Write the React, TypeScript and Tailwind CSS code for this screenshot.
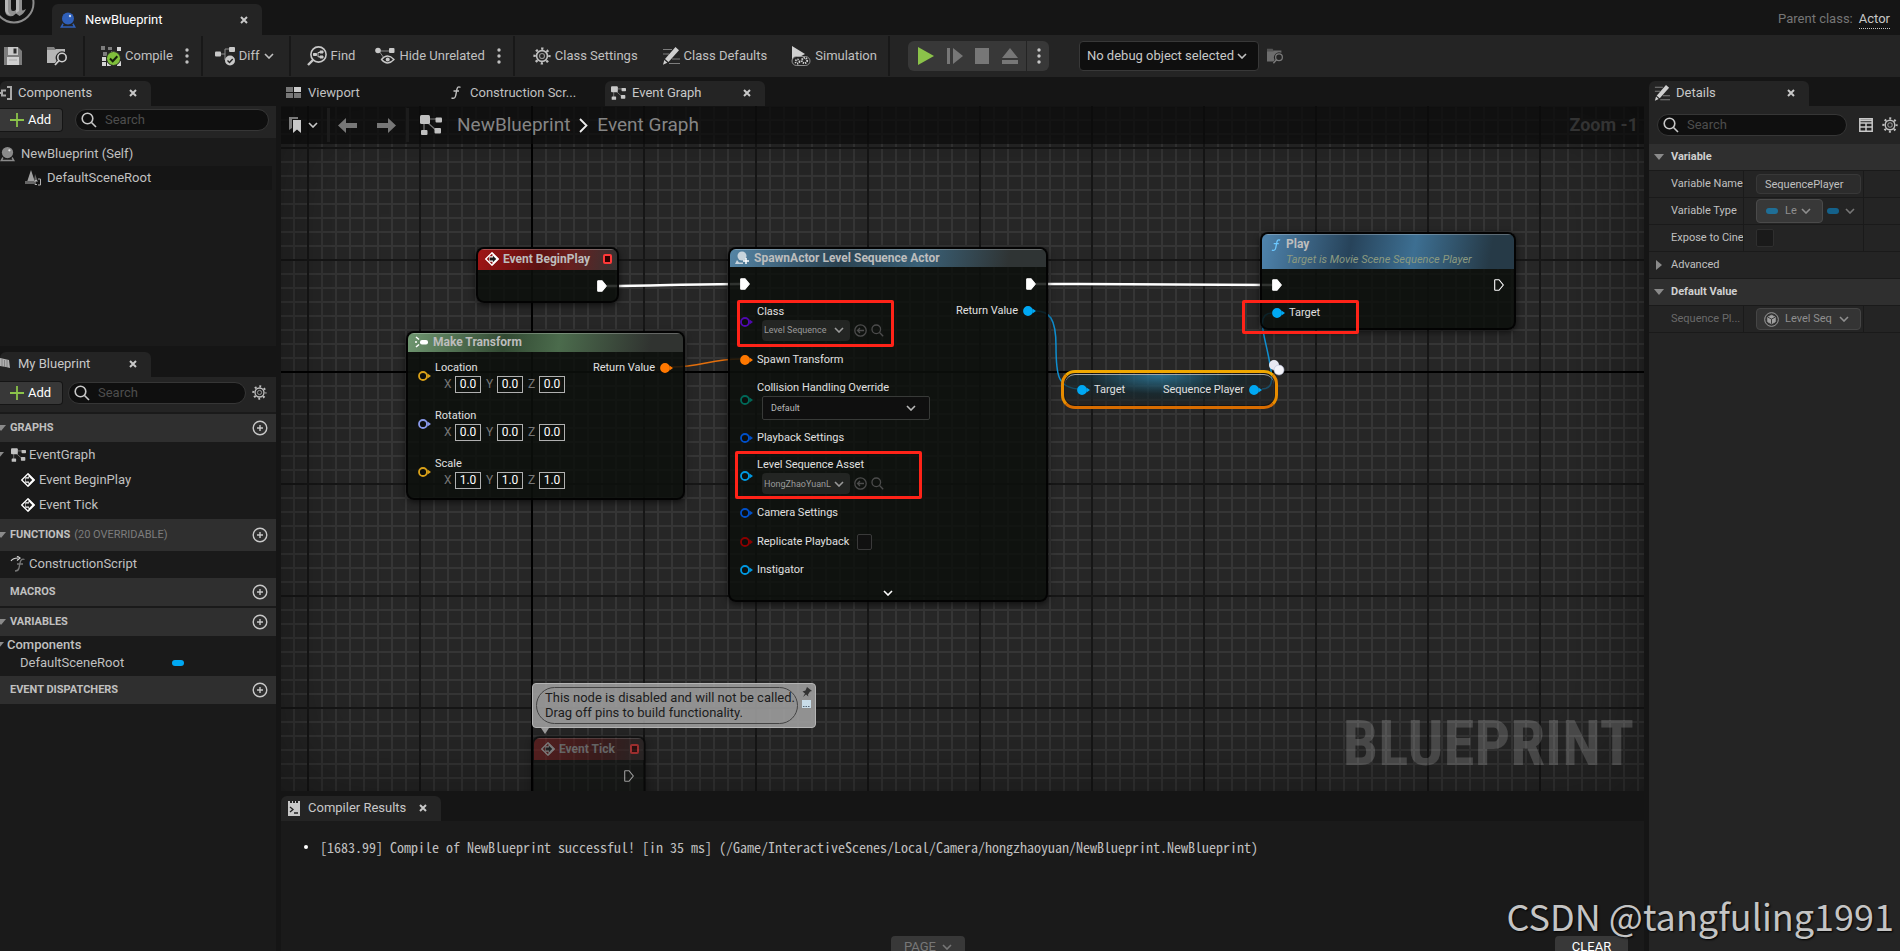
import { useState, type ReactNode } from "react";
import clsx from "clsx";

type IconProps = { className?: string };

/* ---------- icons ---------- */

const Chevron = ({ className = "w-2.5 h-1.5" }: IconProps) => (
  <svg viewBox="0 0 10 6" className={className} fill="none" stroke="currentColor" strokeWidth="1.6">
    <path d="M1 1l4 4 4-4" />
  </svg>
);

const Close = () => (
  <svg viewBox="0 0 8 8" className="w-2 h-2" stroke="currentColor" strokeWidth="2">
    <path d="M1 1l6 6M7 1L1 7" />
  </svg>
);

const Dots = () => (
  <svg viewBox="0 0 4 16" className="w-1 h-4" fill="currentColor">
    <circle cx="2" cy="2" r="1.7" />
    <circle cx="2" cy="8" r="1.7" />
    <circle cx="2" cy="14" r="1.7" />
  </svg>
);

const SearchIcon = ({ className = "w-4 h-4" }: IconProps) => (
  <svg viewBox="0 0 16 16" className={className} fill="none" stroke="currentColor" strokeWidth="1.6">
    <circle cx="6.5" cy="6.5" r="5.3" />
    <path d="M10.5 10.5L15 15" />
  </svg>
);

const Gear = ({ className = "w-4 h-4" }: IconProps) => (
  <svg viewBox="0 0 18 18" className={className} fill="none" stroke="currentColor">
    <circle cx="9" cy="9" r="7.4" strokeWidth="2.4" strokeDasharray="2.3 3.51" strokeDashoffset="1.1" />
    <circle cx="9" cy="9" r="5.4" strokeWidth="1.6" />
    <circle cx="9" cy="9" r="2.5" strokeWidth="1.2" opacity=".7" />
  </svg>
);

const GraphIcon = ({ className = "w-[15px] h-[14px]" }: IconProps) => (
  <svg viewBox="0 0 22 20" className={className} fill="currentColor">
    <path d="M6 4h13M4 5v12M8 8l9 8" stroke="currentColor" strokeWidth="1.2" opacity=".6" />
    <rect width="10" height="9" rx="1.5" />
    <rect x="15.5" y="2.5" width="6.5" height="5" rx="1" />
    <rect x="1" y="15" width="6.5" height="5" rx="1" />
    <rect x="14.5" y="13" width="6.5" height="5.5" rx="1" />
  </svg>
);

const SphereIcon = ({ className }: IconProps) => (
  <svg viewBox="0 0 16 16" className={className} fill="currentColor">
    <circle cx="8" cy="6.5" r="6" />
    <path d="M2.5 11.2L0 15.7h16l-2.500-4.500-1.200 1 .9 2H2.800l.9-2z" />
    <circle cx="10" cy="4" r="1.2" fill="#fff" opacity=".75" />
  </svg>
);

const Save = () => (
  <svg viewBox="0 0 18 18" className="w-[18px] h-[18px]">
    <path d="M0 0h14l4 4v14H0z" fill="#7d7d7d" />
    <path d="M4 0h10v8H4z" fill="#c8c8c8" />
    <path d="M9.5 1.5h3v5h-3z" fill="#2b2b2b" />
    <path d="M3 10h12v8H3z" fill="#d0d0d0" />
    <path d="M5 13h8" stroke="#aaa" />
  </svg>
);

const FolderSearch = ({ className = "w-5 h-5" }: IconProps) => (
  <svg viewBox="0 0 20 20" className={className}>
    <path d="M0 1h7l2 3H0z" fill="currentColor" opacity=".55" />
    <path d="M0 4h8l1-1h9v3a6.500 6.500 0 00-8.500 9L8 17H0z" fill="currentColor" opacity=".85" />
    <circle cx="15" cy="11.5" r="4.2" fill="none" stroke="currentColor" strokeWidth="1.6" />
    <path d="M12 14.5L8 19" stroke="currentColor" strokeWidth="1.8" />
  </svg>
);

const CompileIcon = () => (
  <svg viewBox="0 0 20 20" className="w-5 h-5">
    <path d="M0 0h4v4H0zM7 1h4v3H7zM2 6h4v4H2z" fill="#7d7d7d" />
    <path d="M16 1h4v4h-4zM1 11h4v4H1zM1 16h4v4H1zM6 16h4v4H6zM16 15h4v5h-4zM10 5h4v3h-4z" fill="#d5d5d5" />
    <circle cx="12.5" cy="12.5" r="7" fill="#7fbf3b" stroke="#242424" />
    <path d="M9 12.5l2.700 2.700 4.600-5" stroke="#14200a" strokeWidth="2" fill="none" />
  </svg>
);

const DiffIcon = () => (
  <svg viewBox="0 0 20 20" className="w-5 h-5" fill="#c8c8c8">
    <path d="M5 8h5V3h5M10 8v6" stroke="#8a8a8a" fill="none" />
    <rect y="5.5" width="6" height="5" rx="1" />
    <rect x="14" y="1" width="6" height="5" rx="1" />
    <circle cx="15" cy="14.5" r="5" />
    <path d="M12.5 14.500l2 2 3.200-3.500" stroke="#222" strokeWidth="1.4" fill="none" />
  </svg>
);

const FindIcon = () => (
  <svg viewBox="0 0 20 20" className="w-5 h-5" fill="none" stroke="#c8c8c8">
    <circle cx="11.5" cy="8.5" r="7.6" strokeWidth="1.6" />
    <path d="M6 14L1 19" strokeWidth="2.4" />
    <path d="M6.5 8.500h3m1.500 0V6.500h2M11 8.500v2.300h2" />
    <path d="M6.5 7.500h3v2h-3zM13 5h3v2h-3zM13 10h3v2h-3z" fill="#c8c8c8" />
  </svg>
);

const HideIcon = () => (
  <svg viewBox="0 0 20 18" className="w-5 h-[18px]" fill="#c8c8c8">
    <path d="M4 4h12M4 4l5 7" stroke="#8a8a8a" />
    <circle cx="3" cy="3.5" r="2.8" />
    <rect x="14" y="1" width="5.5" height="5" rx="1" />
    <path d="M6.5 12.500q6-7 12.500 0-6.500 7-12.500 0z" fill="#242424" stroke="#c8c8c8" strokeWidth="1.3" />
    <circle cx="12.7" cy="12.5" r="2" />
  </svg>
);

const PencilIcon = ({ className = "w-[18px] h-[18px]" }: IconProps) => (
  <svg viewBox="0 0 18 18" className={className}>
    <path d="M1 2.500h9M1 7h6M10 12h8M7 16.500h11" stroke="#7d7d7d" strokeWidth="1.2" />
    <path d="M13.5 0L17 3.200 6.500 15 3 12z" fill="#d0d0d0" />
    <path d="M2.3 13l3 2.700L1 17.800z" fill="#d0d0d0" />
  </svg>
);

const SimulationIcon = () => (
  <svg viewBox="0 0 20 20" className="w-5 h-5">
    <path d="M1 0l13 8L1 15z" fill="#d0d0d0" />
    <rect x="1" y="10.5" width="18" height="9" rx="4.5" fill="#242424" stroke="#a8a8a8" strokeWidth=".8" />
    <circle cx="6.5" cy="15.5" r="2" fill="none" stroke="#d0d0d0" strokeWidth="1.8" strokeDasharray="1.2 .9" />
    <circle cx="13.5" cy="14.5" r="2.6" fill="none" stroke="#d0d0d0" strokeWidth="2" strokeDasharray="1.3 .9" />
  </svg>
);

const FuncIcon = ({ className = "w-[10px] h-[13px]" }: IconProps) => (
  <svg viewBox="0 0 10 13" className={className} fill="none" stroke="currentColor" strokeWidth="1.4">
    <path d="M9.5 1.300C7 .2 6.200 1.500 5.800 4L4.700 9.500C4.300 12 3 12.800.5 12M2.500 5h5.500" />
  </svg>
);

const EventIcon = ({ className }: IconProps) => (
  <svg viewBox="0 0 15 15" className={clsx("w-3.5 h-3.5", className)}>
    <path d="M7.5.8l6.700 6.700-6.700 6.700L.8 7.500z" fill="none" stroke="currentColor" strokeWidth="1.4" />
    <path d="M8 .8l6.700 6.700L8 14.200V10.500H4.500V4.500H8z" fill="currentColor" />
    <path d="M5 6h3.500V4L12 7.500 8.500 11V9H5z" fill="#1a1a1a" />
  </svg>
);

const Triangle = ({ className }: IconProps) => (
  <svg viewBox="0 0 10 6" className={clsx("w-2.5 h-1.5 text-[#8a8a8a]", className)} fill="currentColor">
    <path d="M0 0h10L5 6z" />
  </svg>
);

const PlusCircle = () => (
  <svg viewBox="0 0 16 16" className="w-4 h-4" fill="none" stroke="#c8c8c8" strokeWidth="1.4">
    <circle cx="8" cy="8" r="6.8" />
    <path d="M8 5v6M5 8h6" />
  </svg>
);

const Arrow = ({ className }: IconProps) => (
  <svg viewBox="0 0 19 15" className={clsx("w-[19px] h-[15px] text-[#777]", className)} fill="currentColor">
    <path d="M0 7.500L8 0v5h11v5H8v5z" />
  </svg>
);

const BackCircle = () => (
  <svg viewBox="0 0 13 13" className="w-[13px] h-[13px]" fill="none" stroke="#4c4c4c" strokeWidth="1.3">
    <circle cx="6.5" cy="6.5" r="5.7" />
    <path d="M10 6.500H3.500M6 4L3.500 6.500 6 9" />
  </svg>
);

/* ---------- pins ---------- */

function Pin({ color, filled }: { color: string; filled?: boolean }) {
  return (
    <svg viewBox="0 0 13 10" className="w-[13px] h-[10px] shrink-0">
      <circle cx="5" cy="5" r="4" fill={filled ? color : "#0c0e0c"} stroke={color} strokeWidth="1.8" />
      <path d="M9.5 2.500L13 5 9.500 7.500z" fill={color} />
    </svg>
  );
}

function ExecPin({ filled = true }: { filled?: boolean }) {
  return (
    <svg viewBox="0 0 10 12" className="w-[10px] h-[12px] shrink-0">
      <path d="M.7 1.200Q.7.7 1.200.7H5L9.300 6 5 11.300H1.200q-.5 0-.5-.5z" fill={filled ? "#fff" : "none"} stroke="#fff" strokeWidth="1.1" />
    </svg>
  );
}

/* ---------- shared controls ---------- */

function Tab({ icon, label, className }: { icon: ReactNode; label: string; className?: string }) {
  return (
    <div className={clsx("flex items-center h-[25px] pb-0.5 bg-[#242424] rounded-t-md text-[#c8c8c8]", className)}>
      {icon}
      <span className="flex-1 ml-1.5 truncate">{label}</span>
      <button aria-label={`Close ${label}`} className="p-1 mr-2.5">
        <Close />
      </button>
    </div>
  );
}

function SearchBox({ label, className }: { label: string; className?: string }) {
  return (
    <label className={clsx("flex items-center h-[22px] rounded-full border border-[#363636] bg-[#0f0f0f] px-[5px] text-[#c8c8c8]", className)}>
      <SearchIcon className="w-4 h-4 shrink-0" />
      <input aria-label={label} placeholder="Search" className="ml-2 w-full min-w-0 bg-transparent outline-none placeholder:text-[#4d4d4d]" />
    </label>
  );
}

function AddButton() {
  return (
    <button className="flex items-center h-6 w-[63px] shrink-0 pl-2.5 bg-[#383838] border border-l-0 border-[#151515] rounded-r text-white">
      <svg viewBox="0 0 14 14" className="w-3.5 h-3.5 mr-1" stroke="#8bc34a" strokeWidth="1.8">
        <path d="M7 0v14M0 7h14" />
      </svg>
      Add
    </button>
  );
}

function Select({ label, value, className, chevron }: { label: string; value: string; className?: string; chevron?: string }) {
  return (
    <span className="relative inline-flex items-center">
      <select aria-label={label} className={clsx("appearance-none outline-none", className)}>
        <option>{value}</option>
      </select>
      <span className={clsx("absolute pointer-events-none", chevron)}>
        <Chevron />
      </span>
    </span>
  );
}

const Separator = ({ className }: IconProps) => <div className={clsx("w-0.5 self-stretch my-px bg-[#181818]", className)} />;

function ToolButton({ icon, children, className }: { icon: ReactNode; children?: ReactNode; className?: string }) {
  return (
    <button className={clsx("flex items-center gap-1 text-[#c0c0c0] whitespace-nowrap", className)}>
      {icon}
      {children}
    </button>
  );
}

/* ---------- top of the window ---------- */

function TitleBar() {
  return (
    <header className="flex items-end h-[35px] shrink-0">
      <svg viewBox="0 0 52 35" className="w-[52px] h-[35px]">
        <circle cx="14" cy="3" r="19.5" fill="#141414" stroke="#8c8c8c" strokeWidth="2" />
        <path d="M5-1h6v9.500q0 2.500 2 2.500t3-1.500V-1h6v10q0 1.500 1 1.500l3-1.500q-2 5-6.500 7L16 13.500Q13 17 9 16q-4-1-4-6z" fill="#8f8f8f" />
        <path d="M5-1h3v11q0 3.500 3 5-6-.5-6-6zM16-1h3v12l-3 2z" fill="#b5b5b5" />
      </svg>
      <div className="flex items-center h-[31px] w-[210px] bg-[#242424] rounded-t-md text-white">
        <SphereIcon className="w-4 h-4 ml-2 text-[#2f5fb8]" />
        <span className="flex-1 ml-[9px]">NewBlueprint</span>
        <button aria-label="Close NewBlueprint" className="p-1 mr-2.5 text-[#c8c8c8]">
          <Close />
        </button>
      </div>
      <div className="ml-auto self-center flex gap-1.5 mr-2.5 pt-1">
        <span className="text-[#757575]">Parent class:</span>
        <a href="#actor" className="text-[#c8c8c8] leading-4 h-[18px] border-b border-dotted border-[#c8c8c8]">Actor</a>
      </div>
    </header>
  );
}

function Toolbar() {
  return (
    <nav className="flex items-center h-[42px] shrink-0 bg-[#242424] text-[#c0c0c0]">
      <button aria-label="Save" className="ml-1"><Save /></button>
      <button aria-label="Browse to asset" className="ml-[25px] text-[#d0d0d0]"><FolderSearch /></button>
      <Separator className="ml-4" />
      <ToolButton icon={<CompileIcon />} className="ml-4">Compile</ToolButton>
      <button aria-label="Compile options" className="ml-3"><Dots /></button>
      <Separator className="ml-3" />
      <ToolButton icon={<DiffIcon />} className="ml-3">Diff <Chevron /></ToolButton>
      <Separator className="ml-[15px]" />
      <ToolButton icon={<FindIcon />} className="ml-4">Find</ToolButton>
      <ToolButton icon={<HideIcon />} className="ml-5">Hide Unrelated</ToolButton>
      <button aria-label="Hide options" className="ml-3"><Dots /></button>
      <Separator className="ml-3" />
      <ToolButton icon={<Gear className="w-[18px] h-[18px]" />} className="ml-[18px]">Class Settings</ToolButton>
      <ToolButton icon={<PencilIcon />} className="ml-6">Class Defaults</ToolButton>
      <ToolButton icon={<SimulationIcon />} className="ml-6">Simulation</ToolButton>
      <Separator className="ml-[11px]" />
      <div className="flex items-center h-[30px] w-[141px] shrink-0 ml-[18px] rounded-md bg-[#383838] text-[#777]">
        <button aria-label="Play" className="ml-2.5">
          <svg viewBox="0 0 16 18" className="w-4 h-[18px]" fill="#8bc34a"><path d="M0 0l16 9-16 9z" /></svg>
        </button>
        <button aria-label="Step" className="ml-[13px]">
          <svg viewBox="0 0 16 16" className="w-4 h-4" fill="currentColor"><path d="M0 0h3v16H0zM6 0l10 8-10 8z" /></svg>
        </button>
        <button aria-label="Stop" className="ml-3">
          <svg viewBox="0 0 14 16" className="w-3.5 h-4" fill="currentColor"><path d="M0 0h14v16H0z" /></svg>
        </button>
        <button aria-label="Eject" className="ml-[13px]">
          <svg viewBox="0 0 16 16" className="w-4 h-4" fill="currentColor"><path d="M8 0l8 10H0zM0 12h16v4H0z" /></svg>
        </button>
        <button aria-label="Play options" className="ml-2 pl-[10px] h-full border-l border-[#242424] text-[#c8c8c8]"><Dots /></button>
      </div>
      <div className="ml-[30px]">
        <Select
          label="Debug object"
          value="No debug object selected"
          className="w-[180px] h-[30px] pl-[7px] rounded border border-[#383838] bg-[#0f0f0f] text-[#c8c8c8]"
          chevron="right-3"
        />
      </div>
      <button aria-label="Browse debug object" className="ml-2 text-[#7a7a7a]"><FolderSearch className="w-4 h-4" /></button>
    </nav>
  );
}

/* ---------- left column ---------- */

function ComponentsPanel() {
  return (
    <section className="flex flex-col h-[265px] shrink-0">
      <Tab
        label="Components"
        className="w-[151px]"
        icon={
          <svg viewBox="0 0 12 14" className="w-3 h-3.5" fill="none" stroke="#a8a8a8" strokeWidth="2">
            <path d="M6 4.500H2v5h4M0 7h2M7 1h4v12H7" />
          </svg>
        }
      />
      <div className="flex items-center h-8 pb-1 bg-[#242424]">
        <AddButton />
        <SearchBox label="Search components" className="ml-3 mr-[7px] flex-1" />
      </div>
      <ul className="flex-1 bg-[#1a1a1a] pt-1 text-[#c0c0c0]">
        <li className="flex items-center h-6">
          <SphereIcon className="w-[15px] h-4 text-[#8a8a8a]" />
          <span className="ml-1.5">NewBlueprint (Self)</span>
        </li>
        <li className="flex items-center h-6 mr-1 pl-[25px] bg-[#151515]">
          <svg viewBox="0 0 17 16" className="w-[17px] h-4">
            <path d="M6 0l4 12H2z" fill="#a0a0a0" />
            <path d="M10 4l3 8H9zM0 11h9v3H0z" fill="#666" />
            <path d="M12 10.500h-2v4h2M13 9h2.500v6H13" stroke="#b0b0b0" fill="none" />
          </svg>
          <span className="ml-[5px]">DefaultSceneRoot</span>
        </li>
      </ul>
    </section>
  );
}

function SectionHeader({ title, note, open, className }: { title: string; note?: string; open?: boolean; className?: string }) {
  return (
    <div className={clsx("flex items-center bg-[#2f2f2f] pr-2 text-[11px]", className ?? "h-7")}>
      <span className="w-2.5 overflow-hidden">{open && <Triangle className="-ml-1" />}</span>
      <h3 className="font-bold text-[#c0c0c0]">{title}</h3>
      {note && <span className="ml-1 text-[#7d7d7d]">{note}</span>}
      <button aria-label={`Add to ${title}`} className="ml-auto"><PlusCircle /></button>
    </div>
  );
}

function MyBlueprintPanel() {
  return (
    <section className="flex flex-col flex-1 mt-1.5 bg-[#1a1a1a] text-[#c0c0c0]">
      <div className="bg-[#151515]">
        <Tab
          label="My Blueprint"
          className="w-[151px]"
          icon={
            <svg viewBox="0 0 12 14" className="w-3 h-3.5">
              <path d="M0 1l9 2 1 8-4-1-6-1z" fill="#b0b0b0" />
              <path d="M2 2v7M4.500 3v7M7 3v7" stroke="#777" strokeWidth=".8" />
            </svg>
          }
        />
      </div>
      <div className="flex items-center h-[37px] pb-1 pr-[9px] bg-[#242424] border-b-2 border-[#1a1a1a]">
        <AddButton />
        <SearchBox label="Search my blueprint" className="ml-[5px] flex-1" />
        <button aria-label="View options" className="ml-1.5"><Gear className="w-[15px] h-[15px]" /></button>
      </div>
      <SectionHeader title="GRAPHS" open />
      <ul className="h-[77px] leading-[25px]">
        <li className="flex items-center">
          <Triangle className="-ml-1.5 mr-[7px]" />
          <GraphIcon />
          <span className="ml-[3px]">EventGraph</span>
        </li>
        <li className="flex items-center pl-[21px] gap-1"><EventIcon className="text-white" />Event BeginPlay</li>
        <li className="flex items-center pl-[21px] gap-1"><EventIcon className="text-white" />Event Tick</li>
      </ul>
      <SectionHeader title="FUNCTIONS" note="(20 OVERRIDABLE)" open className="h-8" />
      <div className="flex items-center h-[27px] pb-0.5 pl-2.5">
        <svg viewBox="0 0 15 16" className="w-[15px] h-4" fill="none">
          <path d="M1 5q2-3 7-3M7 0l3 2-3 2.500" stroke="#d0d0d0" strokeWidth="1.2" />
          <path d="M14.5 3.500Q11 2 10 7L9 12q-.6 3-4 3M7 8h6" stroke="#777" strokeWidth="1.3" />
        </svg>
        <span className="ml-1">ConstructionScript</span>
      </div>
      <SectionHeader title="MACROS" />
      <SectionHeader title="VARIABLES" open className="mt-0.5 h-7" />
      <div className="h-10 leading-[18px]">
        <div className="flex items-center">
          <Triangle className="-ml-1.5 mr-[3px]" />
          <h4 className="font-medium">Components</h4>
        </div>
        <div className="flex items-center pl-5">
          <span className="w-[152px]">DefaultSceneRoot</span>
          <i className="w-3 h-1.5 rounded-full bg-[#00a8f3]" />
        </div>
      </div>
      <SectionHeader title="EVENT DISPATCHERS" />
    </section>
  );
}

/* ---------- graph ---------- */

function Node({ className, header, headerClass, children }: { className: string; header: ReactNode; headerClass: string; children?: ReactNode }) {
  return (
    <article className={clsx("absolute overflow-hidden rounded-lg border-2 border-black/80 bg-[#0c0f0c]/85 shadow-[0_2px_6px_rgba(0,0,0,.6)]", className)}>
      <h3 className={clsx("flex px-[5px] pb-0.5 text-xs font-bold text-[#bdbdbd] border-t border-white/25", headerClass)}>{header}</h3>
      {children}
    </article>
  );
}

function Row({ pin, label, children, className }: { pin: ReactNode; label: string; children?: ReactNode; className?: string }) {
  return (
    <div className={clsx("flex items-center gap-1", className)}>
      {pin}
      <div>
        <div className="leading-4">{label}</div>
        {children}
      </div>
    </div>
  );
}

function VectorRow({ label, color, value }: { label: string; color: string; value: string }) {
  return (
    <Row pin={<Pin color={color} />} label={label} className="h-12">
      <div className="flex items-center pl-[9px] text-[#777] text-xs">
        {["X", "Y", "Z"].map((axis) => (
          <label key={axis} className="flex items-center w-[42px]">
            <span className="w-[11px]">{axis}</span>
            <input defaultValue={value} className="w-[26px] h-[17px] border border-[#b0b0b0] bg-transparent text-center text-white outline-none" />
          </label>
        ))}
      </div>
    </Row>
  );
}

function AssetPicker({ label, value }: { label: string; value: string }) {
  return (
    <div className="flex items-center gap-1 pl-[5px] text-[#9a9a9a]">
      <Select label={label} value={value} className="w-[88px] h-[21px] pl-0.5 rounded bg-[#232523] text-[9px]" chevron="right-1.5" />
      <button aria-label={`Use selected ${label}`}><BackCircle /></button>
      <button aria-label={`Browse ${label}`} className="text-[#4c4c4c]"><SearchIcon className="w-[13px] h-[13px]" /></button>
    </div>
  );
}

const StopMark = () => <i className="ml-auto w-[9px] h-[10px] border-2 border-[#ff3838] rounded-xs bg-[#300]" />;

function Wires() {
  return (
    <svg className="absolute left-0 top-0 w-full h-full" fill="none">
      <path d="M326 180C370 180 410 178 460 178" stroke="#fff" strokeWidth="2.5" />
      <path d="M755 178C830 178 900 179 991 179" stroke="#fff" strokeWidth="2.5" />
      <path d="M391 261C420 261 430 253 459 253" stroke="#e36f0d" strokeWidth="1.5" />
      <path d="M755 205C768 205 775 212 775 240S776 283 800 283" stroke="#0f8fd0" strokeWidth="1.5" />
      <path d="M981 283C995 283 991 268 987 248S975 207 991 207" stroke="#0f8fd0" strokeWidth="1.5" />
    </svg>
  );
}

const Highlight = ({ className }: IconProps) => <div className={clsx("absolute border-3 border-[#ff2318] rounded-xs pointer-events-none", className)} />;

function SpawnActorNode() {
  const [replicate, setReplicate] = useState(false);
  return (
    <Node
      className="left-[447px] top-[141px] w-[320px] h-[355px]"
      headerClass="items-center h-[18px] bg-[linear-gradient(100deg,#5585a5,#2b4352_35%,#3a6178_60%,#2f3434_88%)]"
      header={
        <>
          <svg viewBox="0 0 14 14" className="w-3.5 h-3.5 mr-[5px]" fill="#c8d4dc">
            <circle cx="7" cy="5" r="4.5" />
            <path d="M0 13l2-4 2 2.500h4V13z" />
            <path d="M11 7v6M8 10h6" stroke="#fff" strokeWidth="1.5" />
          </svg>
          SpawnActor Level Sequence Actor
        </>
      }
    >
      <div className="flex items-center justify-between h-[34px] px-2.5">
        <ExecPin />
        <ExecPin />
      </div>
      <div className="flex justify-between px-2.5">
        <Row pin={<Pin color="#5008b0" />} label="Class" className="h-[42px]">
          <AssetPicker label="Class" value="Level Sequence" />
        </Row>
        <div className="flex items-center gap-[5px] h-5">
          Return Value
          <Pin color="#00a8f3" filled />
        </div>
      </div>
      <div className="px-2.5">
        <Row pin={<Pin color="#ff7800" filled />} label="Spawn Transform" className="h-[33px]" />
        <Row pin={<Pin color="#006858" />} label="Collision Handling Override" className="h-[47px]">
          <div className="pl-[5px] text-[#b8b8b8]">
            <Select label="Collision handling" value="Default" className="w-[168px] h-6 pl-2 rounded-xs border border-[#383a38] bg-[#0f0f0f] text-[9px]" chevron="right-3.5" />
          </div>
        </Row>
        <Row pin={<Pin color="#0050c8" />} label="Playback Settings" className="h-[30px]" />
        <Row pin={<Pin color="#0098e0" />} label="Level Sequence Asset" className="h-[45px]">
          <AssetPicker label="Level sequence asset" value="HongZhaoYuanL" />
        </Row>
        <Row pin={<Pin color="#0050c8" />} label="Camera Settings" className="h-[30px]" />
        <div className="flex items-center gap-1 h-7">
          <Pin color="#8c0000" />
          <label htmlFor="replicate">Replicate Playback</label>
          <input
            id="replicate"
            type="checkbox"
            checked={replicate}
            onChange={(e) => setReplicate(e.target.checked)}
            className="appearance-none w-[15px] h-4 ml-1 rounded-xs border border-[#3a3a3a] bg-[#111] checked:bg-[#26bbff]"
          />
        </div>
        <Row pin={<Pin color="#0098e0" />} label="Instigator" className="h-7" />
      </div>
      <button aria-label="Show advanced pins" className="flex justify-center w-full pt-1.5 text-white"><Chevron /></button>
    </Node>
  );
}

function Graph() {
  return (
    <div className="relative flex-1 min-h-0 overflow-hidden text-[11px] text-[#e0e0e0] bg-[#262626] bg-[linear-gradient(to_right,#161616_2px,transparent_2px),linear-gradient(#161616_2px,transparent_2px),linear-gradient(to_right,#353535_2px,transparent_2px),linear-gradient(#353535_2px,transparent_2px)] bg-[size:112px_112px,112px_112px,14px_14px,14px_14px] bg-[position:26px_41px]">
      {/* origin axes */}
      <div className="absolute left-[250px] inset-y-0 w-0.5 bg-black" />
      <div className="absolute top-[265px] inset-x-0 h-0.5 bg-black" />
      <div className="absolute inset-0 shadow-[inset_0_0_90px_rgba(0,0,0,.45)]" />

      <p className="absolute right-2.5 bottom-4 font-['Roboto_Condensed','Roboto',sans-serif] text-[63px] leading-none font-bold text-white/17">BLUEPRINT</p>

      <Wires />

      <Node
        className="left-[195px] top-[141px] w-[143px] h-[56px]"
        headerClass="items-center h-[21px] bg-[linear-gradient(100deg,#a01414,#5c1212_45%,#6b1f1f_65%,#333)]"
        header={<><EventIcon className="mr-1 ml-0.5 text-white" />Event BeginPlay<StopMark /></>}
      >
        <div className="flex justify-end items-center h-8 pr-2.5"><ExecPin /></div>
      </Node>

      <Node
        className="left-[125px] top-[225px] w-[279px] h-[169px]"
        headerClass="items-center h-[19px] bg-[linear-gradient(100deg,#6f9670,#324a33_35%,#4b6b4c_55%,#303330_88%)]"
        header={
          <>
            <svg viewBox="0 0 14 12" className="w-3.5 h-3 ml-0.5 mr-1" fill="#fff">
              <path d="M1 1l3 2.500M0 6h2M1 11l3-2.500" stroke="#fff" strokeWidth="1.6" />
              <rect x="5" y="4" width="8" height="4.5" rx="2" />
            </svg>
            Make Transform
          </>
        }
      >
        <div className="flex justify-between px-2.5">
          <div>
            <VectorRow label="Location" color="#d8a018" value="0.0" />
            <VectorRow label="Rotation" color="#8898e8" value="0.0" />
            <VectorRow label="Scale" color="#d8a018" value="1.0" />
          </div>
          <div className="flex items-center gap-[5px] h-8">
            Return Value
            <Pin color="#ff7800" filled />
          </div>
        </div>
      </Node>

      <SpawnActorNode />

      <Node
        className="left-[979px] top-[126px] w-[256px] h-[98px]"
        headerClass="h-[35px] bg-[linear-gradient(100deg,#4f84ad,#27435a_35%,#3d6f92_60%,#263a47_90%)]"
        header={
          <>
            <FuncIcon className="w-[10px] h-[12px] mt-1 ml-1 mr-[5px] text-[#6cc8ff]" />
            <span className="leading-[15px] pt-0.5">
              Play
              <em className="block text-[11px] font-normal text-[#8b9a80]">Target is Movie Scene Sequence Player</em>
            </span>
          </>
        }
      >
        <div className="flex items-center justify-between h-8 px-2.5">
          <ExecPin />
          <ExecPin filled={false} />
        </div>
        <Row pin={<Pin color="#00a8f3" filled />} label="Target" className="h-6 px-2.5" />
      </Node>

      {/* selected variable node */}
      <article className="absolute left-[780px] top-[264px] w-[217px] h-[39px] rounded-[14px] border-3 border-t-[#f0a800] border-x-[#e88c00] border-b-[#d86c00] bg-black/40 p-px">
        <div className="flex items-center h-full rounded-[10px] border-t border-white/60 px-3 bg-[radial-gradient(ellipse_at_45%_0%,rgba(50,140,180,.75),rgba(30,60,70,.5)_45%,rgba(60,60,60,.35)_75%)]">
          <Pin color="#00a8f3" filled />
          <span className="ml-1">Target</span>
          <span className="ml-auto mr-[5px]">Sequence Player</span>
          <Pin color="#00a8f3" filled />
        </div>
      </article>
      <svg className="absolute left-[985px] top-[251px] w-5 h-5">
        <circle cx="8" cy="8" r="5" fill="#e8e8f0" />
        <circle cx="13" cy="13" r="5" fill="#f4f4fa" stroke="#b8c0d8" strokeWidth=".6" />
      </svg>

      {/* disabled tick event with its comment bubble */}
      <Node
        className="left-[251px] top-[630px] w-[114px] h-[80px] opacity-55"
        headerClass="items-center h-[22px] bg-[linear-gradient(100deg,#7c1c1c,#4c1616_60%,#2c2828)]"
        header={<><EventIcon className="mr-1 ml-0.5" /><span className="text-[#999]">Event Tick</span><StopMark /></>}
      >
        <div className="flex justify-end items-center h-8 pr-2.5"><ExecPin filled={false} /></div>
      </Node>
      <div className="absolute left-[251px] top-[577px] w-[284px] h-[45px] rounded border border-[#b4b4b4] bg-[#a4a4a4]/85 text-[#1c1c1c]">
        <p className="absolute left-[3px] top-[3px] w-[262px] h-[37px] rounded-full border border-[#444] pl-2 pt-0.5 text-[13px] leading-[15px] whitespace-nowrap">
          This node is disabled and will not be called.
          <br />
          Drag off pins to build functionality.
        </p>
        <svg viewBox="0 0 10 22" className="absolute right-[3px] top-[3px] w-2.5 h-[22px]">
          <path d="M5 0l5 4-2 .5-2 3 .3 2-2.300-2L1 10l2-3.500L.5 4.500l3-1z" fill="#333" />
          <rect y="13" width="9" height="8" fill="#c8dce8" />
          <path d="M1 19.500h7" stroke="#567" strokeDasharray="1.5 1" />
        </svg>
        <svg viewBox="0 0 8 6" className="absolute left-2 top-[44px] w-2 h-1.5"><path d="M0 0h8L4 6z" fill="#999" /></svg>
      </div>

      <Highlight className="left-[456px] top-[194px] w-[157px] h-[47px]" />
      <Highlight className="left-[454px] top-[345px] w-[187px] h-[48px]" />
      <Highlight className="left-[961px] top-[194px] w-[117px] h-[34px]" />

      {/* breadcrumb strip */}
      <div className="relative flex items-center h-[38px] bg-[#0a0a0a]/70 text-[19px] text-[#858585]">
        <button aria-label="Bookmarks" className="flex items-center ml-2 text-[#c8c8c8]">
          <svg viewBox="0 0 12 16" className="w-3 h-4 mr-[7px]">
            <path d="M0 0h9v2H3v9l-3 2z" fill="#7a7a7a" />
            <path d="M4 3h8v13l-4-3.500L4 16z" fill="#c8c8c8" />
          </svg>
          <Chevron />
        </button>
        <div className="w-[3px] h-[34px] ml-[9px] bg-[#1c1c1c]" />
        <button aria-label="Back" className="ml-2"><Arrow /></button>
        <button aria-label="Forward" className="ml-5"><Arrow className="rotate-180" /></button>
        <div className="w-[3px] h-[34px] ml-2.5 bg-[#1c1c1c]" />
        <GraphIcon className="w-[22px] h-5 ml-[11px] text-[#c0c0c0]" />
        <a href="#blueprint" className="ml-[15px]">NewBlueprint</a>
        <svg viewBox="0 0 9 15" className="w-[9px] h-[15px] mx-[9px]" fill="none" stroke="#eee" strokeWidth="1.8"><path d="M1 1l6.500 6.500L1 14" /></svg>
        <span>Event Graph</span>
        <span className="ml-auto mr-1.5 text-[18px] font-bold text-[#333]">Zoom -1</span>
      </div>
    </div>
  );
}

function CenterPanel() {
  return (
    <main className="flex flex-col flex-1 min-w-0">
      <div className="flex items-center h-[25px] shrink-0 text-[#c0c0c0]">
        <button className="flex items-center ml-[5px] pb-0.5 w-[165px]">
          <svg viewBox="0 0 15 11" className="w-[15px] h-[11px] mr-[7px]">
            <path d="M0 0h7v5H0zM0 6h7v5H0zM8 6h7v5H8z" fill="#777" />
            <path d="M8 0h7v5H8z" fill="#ccc" />
          </svg>
          Viewport
        </button>
        <button className="flex items-center w-[154px] pb-0.5 whitespace-nowrap"><FuncIcon className="w-[10px] h-[13px] mr-[9px]" />Construction Scr...</button>
        <Tab label="Event Graph" icon={<GraphIcon />} className="w-[160px] pl-1.5" />
      </div>
      <Graph />
      <section className="flex flex-col h-[160px] shrink-0 pt-[5px]">
        <Tab
          label="Compiler Results"
          className="w-[160px] pl-[7px]"
          icon={
            <svg viewBox="0 0 12 16" className="w-3 h-4 mr-0.5">
              <path d="M0 1h2v2h2V1h1v2h2V1h1v2h2V1h2v15H0z" fill="#c8c8c8" />
              <path d="M2 7l3 2.500L2 12M6 13h4" stroke="#222" strokeWidth="1.3" fill="none" />
            </svg>
          }
        />
        <div className="relative flex-1 bg-[#1a1a1a] overflow-hidden">
          <ul className="pt-[18px] font-['Noto_Sans_Mono_CJK_SC','DejaVu_Sans_Mono',monospace] text-sm leading-4 text-[#c0c0c0]">
            <li className="flex items-center whitespace-nowrap">
              <i className="w-1 h-1 rounded-full bg-white ml-[23px] mr-3" />
              [1683.99] Compile of NewBlueprint successful! [in 35 ms] (/Game/InteractiveScenes/Local/Camera/hongzhaoyuan/NewBlueprint.NewBlueprint)
            </li>
          </ul>
          <button className="absolute left-[610px] top-[115px] flex items-center justify-center gap-1.5 w-[74px] h-[22px] rounded bg-[#383838] text-[#777]">PAGE <Chevron /></button>
          <button className="absolute right-4 top-[115px] w-[73px] h-[22px] rounded bg-[#383838] text-white">CLEAR</button>
        </div>
      </section>
    </main>
  );
}

/* ---------- details ---------- */

function DetailRow({ label, dim, children }: { label: string; dim?: boolean; children: ReactNode }) {
  return (
    <div className="flex h-[27px] border-b border-[#1a1a1a]">
      <span className={clsx("w-[95px] shrink-0 pl-[22px] leading-[25px] overflow-hidden whitespace-nowrap border-r border-[#1a1a1a]", dim && "text-[#6a6a6a]")}>{label}</span>
      <div className="flex items-center gap-1 w-[120px] shrink-0 pl-3 border-r border-[#1a1a1a]">{children}</div>
    </div>
  );
}

function DetailHeader({ title }: { title: string }) {
  return (
    <h3 className="flex items-center h-[27px] pl-[5px] gap-[7px] bg-[#2f2f2f] border-b border-[#1a1a1a] font-bold text-[#d0d0d0]">
      <Triangle />
      {title}
    </h3>
  );
}

function DetailsPanel() {
  return (
    <aside className="flex flex-col w-[251px] shrink-0">
      <Tab label="Details" className="w-[160px] pl-[5px]" icon={<PencilIcon className="w-4 h-4" />} />
      <div className="flex-1 bg-[#242424] text-[11px] text-[#c0c0c0]">
        <div className="flex items-center h-[38px] pl-2 pr-0.5 text-[13px]">
          <SearchBox label="Search details" className="w-[190px]" />
          <button aria-label="Property matrix" className="ml-3">
            <svg viewBox="0 0 14 14" className="w-3.5 h-3.5" fill="none" stroke="#c8c8c8" strokeWidth="1.5">
              <path d="M.8.8h12.400v12.400H.8zM1 5h12M1 9h12M7 5v8M1 2.500h12" />
            </svg>
          </button>
          <button aria-label="Details settings" className="ml-auto"><Gear /></button>
        </div>
        <DetailHeader title="Variable" />
        <DetailRow label="Variable Name">
          <input aria-label="Variable Name" defaultValue="SequencePlayer" className="w-[105px] h-5 px-2 rounded border border-[#383838] bg-[#2c2c2c] outline-none" />
        </DetailRow>
        <DetailRow label="Variable Type">
          <div className="relative flex items-center text-[#8f8f8f]">
            <Select label="Variable Type" value="Le" className="w-[67px] h-6 pl-7 rounded border border-[#4a4a4a] bg-[#383838]" chevron="right-3" />
            <i className="absolute left-2.5 w-3 h-1.5 rounded-full bg-[#1f6e96]" />
          </div>
          <button aria-label="Container type" className="flex items-center gap-1.5 text-[#777]">
            <i className="w-3 h-1.5 rounded-full bg-[#14618a]" />
            <Chevron />
          </button>
        </DetailRow>
        <DetailRow label="Expose to Cine">
          <input type="checkbox" aria-label="Expose to Cine" className="appearance-none w-[18px] h-[18px] rounded-xs border border-[#2f2f2f] bg-[#1a1a1a]" />
        </DetailRow>
        <div className="flex items-center h-[27px] pl-[5px] gap-[7px] border-b border-[#1a1a1a]">
          <Triangle className="-rotate-90" />
          Advanced
        </div>
        <DetailHeader title="Default Value" />
        <DetailRow label="Sequence Pl..." dim>
          <div className="relative flex items-center text-[#8f8f8f]">
            <Select label="Sequence Player" value="Level Seq" className="w-[105px] h-[22px] pl-7 rounded border border-[#454545] bg-[#343434]" chevron="right-3" />
            <svg viewBox="0 0 16 16" className="absolute left-2 w-[15px] h-[15px] pointer-events-none" fill="none" stroke="#a0a0a0">
              <circle cx="8" cy="8" r="7.3" />
              <path d="M8 3.500l4 2v5l-4 2-4-2v-5z" fill="#a0a0a0" />
              <path d="M4 5.500l4 2 4-2M8 7.500v5" stroke="#343434" />
            </svg>
          </div>
        </DetailRow>
      </div>
    </aside>
  );
}

export default function App() {
  return (
    <div className="relative flex flex-col h-screen overflow-hidden bg-[#151515] font-['Roboto',sans-serif] text-[13px] leading-4">
      <TitleBar />
      <Toolbar />
      <div className="flex flex-1 min-h-0 gap-[5px] pt-1">
        <div className="flex flex-col w-[276px] shrink-0">
          <ComponentsPanel />
          <MyBlueprintPanel />
        </div>
        <CenterPanel />
        <DetailsPanel />
      </div>
      <p className="absolute right-1.5 bottom-4 font-['Noto_Sans_CJK_SC',sans-serif] text-[36px] leading-10 text-[#c4c4c4] pointer-events-none [text-shadow:1px_1px_2px_#000]">CSDN @tangfuling1991</p>
    </div>
  );
}
